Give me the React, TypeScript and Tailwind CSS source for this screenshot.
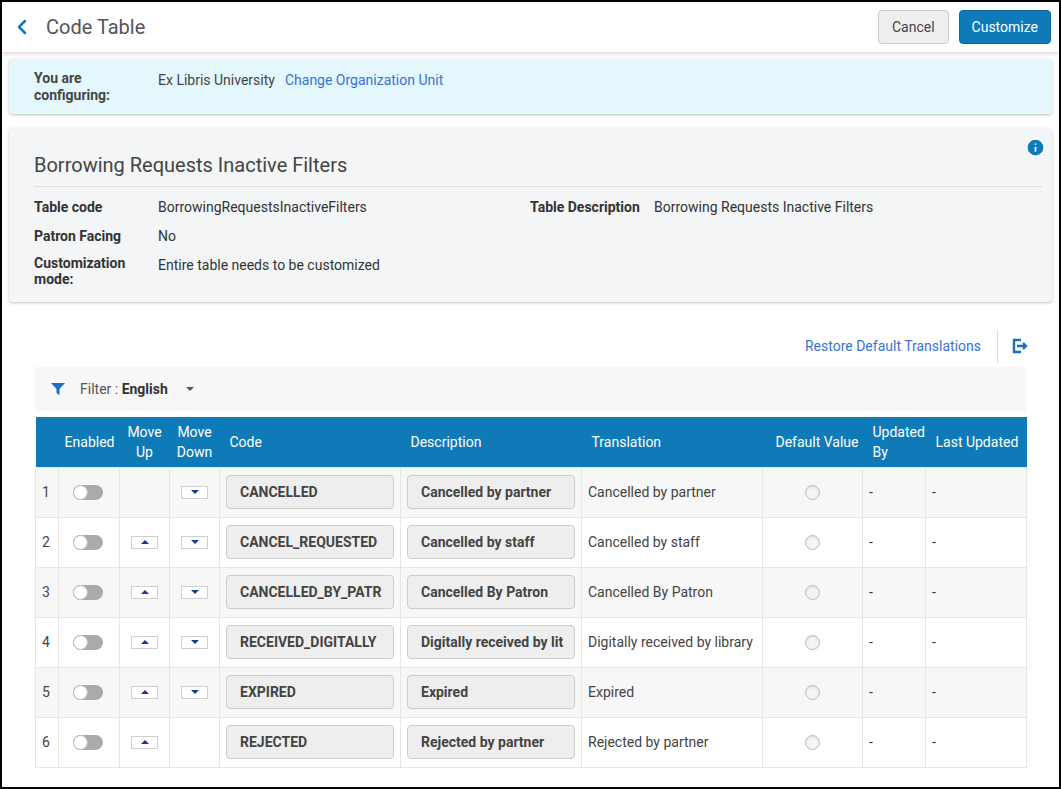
import React from "react";
import { ChevronLeft, Info } from "lucide-react";

const rows = [
  ["CANCELLED", "Cancelled by partner", "Cancelled by partner", false, true],
  ["CANCEL_REQUESTED", "Cancelled by staff", "Cancelled by staff", true, true],
  ["CANCELLED_BY_PATR", "Cancelled By Patron", "Cancelled By Patron", true, true],
  ["RECEIVED_DIGITALLY", "Digitally received by lit", "Digitally received by library", true, true],
  ["EXPIRED", "Expired", "Expired", true, true],
  ["REJECTED", "Rejected by partner", "Rejected by partner", true, false],
] as const;

function Arrow({ up }: { up?: boolean }) {
  return (
    <div className="w-[27px] h-[13px] border border-[#cfcfcf] bg-white flex items-center justify-center">
      <div
        className={`w-0 h-0 border-l-[4px] border-r-[4px] border-l-transparent border-r-transparent ${
          up ? "border-b-[4px] border-b-[#1a3a8a]" : "border-t-[4px] border-t-[#1a3a8a]"
        }`}
      />
    </div>
  );
}

export default function App() {
  return (
    <div
      className="w-[1061px] h-[789px] border-2 border-black bg-white text-[#333] text-[14px] overflow-hidden"
      style={{ fontFamily: "Roboto, 'Liberation Sans', sans-serif" }}
    >
      {/* Header */}
      <div className="h-[50px] flex items-center justify-between pl-2 pr-[8px] shadow-[0_2px_4px_rgba(0,0,0,0.15)] relative z-10">
        <div className="flex items-center gap-3">
          <ChevronLeft className="w-6 h-6 text-[#0e7bb8]" strokeWidth={2.5} />
          <span className="text-[20px] text-[#555]">Code Table</span>
        </div>
        <div className="flex items-center gap-[10px]">
          <button className="h-[34px] px-[13px] rounded border border-[#ccc] bg-[#eee] text-[#444]">Cancel</button>
          <button className="h-[34px] px-[12px] rounded border border-[#0b6aa0] bg-[#0e7bb8] text-white">Customize</button>
        </div>
      </div>

      <div className="px-[7px] pt-[7px]">
        {/* Configuring banner */}
        <div className="bg-[#e4f7fd] rounded shadow-[0_1px_3px_rgba(0,0,0,0.25)] h-[55px] px-[25px] pt-[11px] flex text-[14px]">
          <div className="w-[124px] font-bold leading-[17px] text-[#444]">You are<br />configuring:</div>
          <div className="text-[#444]">Ex Libris University</div>
          <div className="ml-[10px] text-[#3b73d1]">Change Organization Unit</div>
        </div>

        {/* Info panel */}
        <div className="mt-[14px] bg-[#f3f5f6] rounded shadow-[0_1px_3px_rgba(0,0,0,0.25)] h-[174px] pl-[25px] pr-[8px] pt-[10px] relative">
          <Info className="absolute right-[6px] top-[9px] w-[21px] h-[21px] text-white fill-[#0e7bb8]" />
          <div className="text-[20px] text-[#444] pt-[12px] pb-[6px] mr-[2px] border-b border-[#ddd]">Borrowing Requests Inactive Filters</div>
          <div className="flex pt-[10px]">
            <div className="w-[496px] flex flex-col gap-[8px]">
              <div className="flex"><span className="w-[124px] font-bold">Table code</span><span>BorrowingRequestsInactiveFilters</span></div>
              <div className="flex"><span className="w-[124px] font-bold">Patron Facing</span><span>No</span></div>
              <div className="flex"><span className="w-[124px] font-bold leading-[16px]">Customization mode:</span><span>Entire table needs to be customized</span></div>
            </div>
            <div className="flex"><span className="w-[124px] font-bold">Table Description</span><span>Borrowing Requests Inactive Filters</span></div>
          </div>
        </div>

        {/* Actions */}
        <div className="mt-[26px] flex justify-end items-center h-[36px] pr-[24px]">
          <span className="text-[#3b73d1] pr-[16px] border-r border-[#ddd] h-[33px] flex items-center">Restore Default Translations</span>
          <svg className="ml-[12px] w-[18px] h-[18px]" viewBox="0 0 18 18" fill="none" stroke="#1a6fc0" strokeWidth="2.4">
            <path d="M11 3H4v12h7" />
            <path d="M7 9h9M13 6l3 3-3 3" />
          </svg>
        </div>

        {/* Filter bar */}
        <div className="ml-[26px] mr-[26px] mt-[3px] h-[44px] bg-[#f7f7f7] flex items-center pl-[16px]">
          <svg className="w-[14px] h-[12px]" viewBox="0 0 14 12"><path d="M0 0h14L8.5 6v6L5.5 10V6z" fill="#1a6fc0" /></svg>
          <span className="ml-[15px] text-[#555]">Filter : <b className="text-[#333]">English</b></span>
          <div className="ml-[18px] w-0 h-0 border-l-[4px] border-r-[4px] border-t-[4px] border-l-transparent border-r-transparent border-t-[#555]" />
        </div>

        {/* Table */}
        <table className="ml-[26px] mt-[6px] w-[991px] border-collapse table-fixed text-[14px]">
          <colgroup>
            <col className="w-[23px]" /><col className="w-[61px]" /><col className="w-[50px]" /><col className="w-[50px]" />
            <col className="w-[181px]" /><col className="w-[181px]" /><col className="w-[181px]" /><col className="w-[100px]" />
            <col className="w-[63px]" /><col className="w-[101px]" />
          </colgroup>
          <thead>
            <tr className="bg-[#0e7bb8] text-white h-[50px] leading-[20px]">
              <th className="font-normal"></th>
              <th className="font-normal text-right pr-[5px]">Enabled</th>
              <th className="font-normal">Move<br />Up</th>
              <th className="font-normal">Move<br />Down</th>
              <th className="font-normal text-left pl-[10px]">Code</th>
              <th className="font-normal text-left pl-[10px]">Description</th>
              <th className="font-normal text-left pl-[10px]">Translation</th>
              <th className="font-normal text-right pr-[4px]">Default Value</th>
              <th className="font-normal text-left pl-[10px]">Updated<br />By</th>
              <th className="font-normal text-left pl-[10px]">Last Updated</th>
            </tr>
          </thead>
          <tbody>
            {rows.map(([code, desc, tr, up, down], i) => (
              <tr key={code} className={`h-[50px] ${i % 2 === 0 ? "bg-[#f7f7f7]" : "bg-white"}`}>
                <td className="border border-[#e6e6e6] pl-[6px] text-[#444]">{i + 1}</td>
                <td className="border border-[#e6e6e6]">
                  <div className="ml-[14px] w-[30px] h-[15px] rounded-full bg-[#aaa] relative">
                    <div className="absolute left-0 top-0 w-[15px] h-[15px] rounded-full bg-white border border-[#bbb]" />
                  </div>
                </td>
                <td className="border border-[#e6e6e6]"><div className="flex justify-center">{up && <Arrow up />}</div></td>
                <td className="border border-[#e6e6e6]"><div className="flex justify-center">{down && <Arrow />}</div></td>
                <td className="border border-[#e6e6e6] px-[6px]">
                  <div className="h-[34px] rounded border border-[#ccc] bg-[#eee] font-bold text-[#444] flex items-center px-[13px] whitespace-nowrap overflow-hidden">{code}</div>
                </td>
                <td className="border border-[#e6e6e6] px-[6px]">
                  <div className="h-[34px] rounded border border-[#ccc] bg-[#eee] font-bold text-[#444] flex items-center px-[13px] whitespace-nowrap overflow-hidden">{desc}</div>
                </td>
                <td className="border border-[#e6e6e6] pl-[6px] text-[#444] whitespace-nowrap">{tr}</td>
                <td className="border border-[#e6e6e6]">
                  <div className="mx-auto w-[15px] h-[15px] rounded-full border border-[#bbb] bg-[#f4f4f4] shadow-[inset_0_1px_2px_rgba(0,0,0,0.1)]" />
                </td>
                <td className="border border-[#e6e6e6] pl-[6px]">-</td>
                <td className="border border-[#e6e6e6] pl-[6px]">-</td>
              </tr>
            ))}
          </tbody>
        </table>
      </div>
    </div>
  );
}
